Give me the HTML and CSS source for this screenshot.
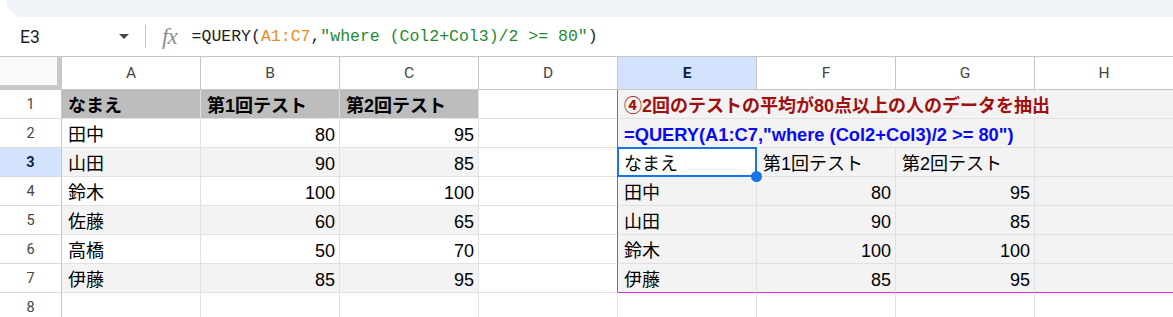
FILE: index.html
```html
<!DOCTYPE html>
<html lang="ja">
<head>
    <meta charset="UTF-8">
    <title>QUERY sample</title>
    <link rel="stylesheet" href="styles.css">
</head>
<body>

<div class="toolbar"></div>

<div class="formula-bar">
    <div class="name-box">
        <span>E3</span>
        <span class="caret"></span>
    </div>
    <div class="sep"></div>
    <span class="fx">fx</span>
    <div class="formula">=QUERY(<span class="ref">A1:C7</span>,<span class="str">"where (Col2+Col3)/2 &gt;= 80"</span>)</div>
</div>

<div class="sheet">
    <div class="corner"></div>
    <div class="col-head">A</div>
    <div class="col-head">B</div>
    <div class="col-head">C</div>
    <div class="col-head">D</div>
    <div class="col-head active">E</div>
    <div class="col-head">F</div>
    <div class="col-head">G</div>
    <div class="col-head">H</div>

    <!-- row 1 -->
    <div class="row-head">1</div>
    <div class="c title">なまえ</div>
    <div class="c title">第1回テスト</div>
    <div class="c title">第2回テスト</div>
    <div class="c edge"></div>
    <div class="c out note span4">④2回のテストの平均が80点以上の人のデータを抽出</div>

    <!-- row 2 -->
    <div class="row-head">2</div>
    <div class="c">田中</div>
    <div class="c num">80</div>
    <div class="c num">95</div>
    <div class="c edge"></div>
    <div class="c out formula-text span3">=QUERY(A1:C7,"where (Col2+Col3)/2 &gt;= 80")</div>
    <div class="c out"></div>

    <!-- row 3 -->
    <div class="row-head active">3</div>
    <div class="c band">山田</div>
    <div class="c band num">90</div>
    <div class="c band num">85</div>
    <div class="c edge"></div>
    <div class="c selected">なまえ</div>
    <div class="c out">第1回テスト</div>
    <div class="c out">第2回テスト</div>
    <div class="c out"></div>

    <!-- row 4 -->
    <div class="row-head">4</div>
    <div class="c">鈴木</div>
    <div class="c num">100</div>
    <div class="c num">100</div>
    <div class="c edge"></div>
    <div class="c out">田中</div>
    <div class="c out num">80</div>
    <div class="c out num">95</div>
    <div class="c out"></div>

    <!-- row 5 -->
    <div class="row-head">5</div>
    <div class="c band">佐藤</div>
    <div class="c band num">60</div>
    <div class="c band num">65</div>
    <div class="c edge"></div>
    <div class="c out">山田</div>
    <div class="c out num">90</div>
    <div class="c out num">85</div>
    <div class="c out"></div>

    <!-- row 6 -->
    <div class="row-head">6</div>
    <div class="c">高橋</div>
    <div class="c num">50</div>
    <div class="c num">70</div>
    <div class="c edge"></div>
    <div class="c out">鈴木</div>
    <div class="c out num">100</div>
    <div class="c out num">100</div>
    <div class="c out"></div>

    <!-- row 7 -->
    <div class="row-head">7</div>
    <div class="c band">伊藤</div>
    <div class="c band num">85</div>
    <div class="c band num">95</div>
    <div class="c edge"></div>
    <div class="c out last">伊藤</div>
    <div class="c out last num">85</div>
    <div class="c out last num">95</div>
    <div class="c out last"></div>

    <!-- row 8 -->
    <div class="row-head">8</div>
    <div class="c"></div>
    <div class="c"></div>
    <div class="c"></div>
    <div class="c"></div>
    <div class="c"></div>
    <div class="c"></div>
    <div class="c"></div>
    <div class="c"></div>
</div>

</body>
</html>
```

FILE: styles.css
```css
/* sheet look */
body { margin: 0; overflow: hidden; background: #fff; font-family: "Liberation Sans", "Noto Sans CJK JP", sans-serif; }

.toolbar { height: 17px; margin-left: 6px; background: #f0f4f9; border-bottom-left-radius: 22px; }

.formula-bar { height: 39px; display: flex; align-items: center; border-bottom: 1px solid #c4c7c5; }
.name-box { width: 145px; box-sizing: border-box; padding: 0 16px 0 20px; display: flex; justify-content: space-between; align-items: center; font: 17.5px Roboto, "Liberation Sans", sans-serif; color: #1f1f1f; }
.caret { width: 0; height: 0; border-left: 5px solid transparent; border-right: 5px solid transparent; border-top: 5px solid #444746; }
.sep { width: 1px; height: 23px; background: #c4c7c5; }
.fx { margin-left: 16px; font: italic 23px "Liberation Serif", serif; color: #8a8e91; letter-spacing: -1px; }
.formula { margin-left: 15px; font: 16.5px "Liberation Mono", monospace; color: #1f1f1f; white-space: nowrap; }
.formula .ref { color: #ef8a1d; }
.formula .str { color: #1f8a33; }

.sheet { display: grid; grid-template-columns: 62px repeat(8, 139px); grid-template-rows: 33px; grid-auto-rows: 29px; width: max-content; }

.corner { background: #f8f9fa; border-right: 5px solid #c8c9ca; border-bottom: 5px solid #c8c9ca; box-sizing: border-box; }
.col-head { display: flex; align-items: center; justify-content: center; border-right: 1px solid #c7c7c7; border-bottom: 1px solid #c7c7c7; font: 15.5px Roboto, "Liberation Sans", sans-serif; color: #444746; }
.row-head { display: flex; align-items: center; justify-content: center; border-right: 1px solid #c7c7c7; border-bottom: 1px solid #dadada; font: 14.5px Roboto, "Liberation Sans", sans-serif; color: #444746; }
.col-head.active, .row-head.active { background: #d3e3fd; color: #0b1f47; font-weight: bold; }

.c { display: flex; align-items: flex-end; padding: 0 4px 1px 6px; border-right: 1px solid #e1e1e1; border-bottom: 1px solid #e1e1e1; font-size: 18px; line-height: 22px; color: #000; white-space: nowrap; overflow: visible; min-width: 0; }
.c.num { justify-content: flex-end; }
.c.title { background: #bdbdbd; font-weight: bold; }
.c.band { background: #f3f3f3; }
.c.edge { border-right-color: #d030d0; }
.c.out { background: #f3f3f3; }
.c.last { border-bottom-color: #d030d0; }
.span4 { grid-column: span 4; }
.span3 { grid-column: span 3; }
.note { color: #a10f0f; font-weight: bold; }
.formula-text { color: #0a0af0; font-weight: bold; font-size: 18.3px; }

.selected { position: relative; background: #fff; }
.selected::after { content: ""; position: absolute; top: -1px; left: -1px; right: -1px; bottom: -1px; border: 2px solid #1a73e8; z-index: 2; }
.selected::before { content: ""; position: absolute; right: -6px; bottom: -6px; width: 11px; height: 11px; border-radius: 50%; background: #1a73e8; z-index: 3; }
```
